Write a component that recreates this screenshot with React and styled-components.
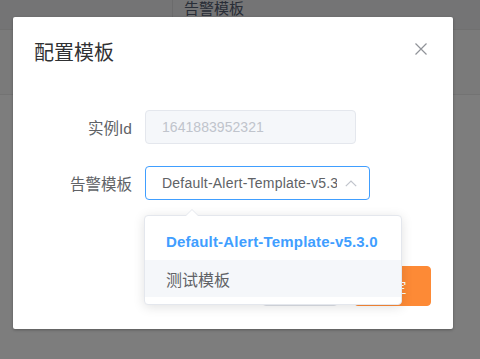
import React from "react";
import styled, { createGlobalStyle } from "styled-components";

const Global = createGlobalStyle`
  html, body { margin: 0; padding: 0; }
  body {
    width: 480px;
    height: 359px;
    overflow: hidden;
    background: #fafafa;
    font-family: "Liberation Sans", Arial, "Noto Sans CJK SC", sans-serif;
  }
  * { box-sizing: border-box; }
`;

const Page = styled.div`
  position: relative;
  width: 480px;
  height: 359px;
  overflow: hidden;
`;

const TableHead = styled.div`
  display: flex;
  height: 30px;
  background: #e8e8ea;
  border-bottom: 1px solid #e0e0e0;
`;

const HeadCell = styled.div`
  width: ${(p) => p.$w || "auto"};
  flex: ${(p) => (p.$w ? "none" : "1")};
  border-left: ${(p) => (p.$divider ? "1px solid #d6d6d8" : "none")};
  padding-left: 11px;
  font-family: "Noto Sans CJK SC", sans-serif;
  font-size: 15px;
  line-height: 16px;
  color: #515a6e;
`;

const TableRow = styled.div`
  height: 65px;
  background: #f4f4f4;
  border-bottom: 1px solid #e6e6e6;
`;

const Overlay = styled.div`
  position: absolute;
  inset: 0;
  background: rgba(0, 0, 0, 0.5);
  padding: 17px 0 0 13px;
`;

const Dialog = styled.div`
  width: 440px;
  background: #fff;
  border-radius: 2px;
  box-shadow: 0 1px 3px rgba(0, 0, 0, 0.3);
`;

const Header = styled.div`
  display: flex;
  justify-content: space-between;
  align-items: flex-start;
  padding: 20px 20px 0;
`;

const Title = styled.div`
  font-family: "Noto Sans CJK SC", sans-serif;
  font-size: 20px;
  line-height: 30px;
  color: #303133;
  margin-left: 1px;
`;

const CloseIcon = styled.svg`
  margin: 6px 6px 0 0;
  display: block;
`;

const Body = styled.div`
  padding: 43px 20px 0;
`;

const FormRow = styled.div`
  display: flex;
  align-items: center;
  height: 34px;
  margin-bottom: ${(p) => p.$mb || 0}px;
`;

const Label = styled.div`
  width: 112px;
  padding-right: 13px;
  text-align: right;
  font-family: "Liberation Sans", Arial, "Noto Sans CJK SC", sans-serif;
  font-size: 15.5px;
  color: #606266;
`;

const DisabledInput = styled.div`
  width: 211px;
  height: 34px;
  border: 1px solid #e4e7ed;
  border-radius: 4px;
  background: #f5f7fa;
  padding: 0 16px;
  display: flex;
  align-items: center;
  font-size: 14px;
  letter-spacing: 0.05px;
  color: #c0c4cc;
`;

const SelectWrap = styled.div`
  position: relative;
`;

const Select = styled.div`
  width: 225px;
  height: 34px;
  border: 1px solid #409eff;
  border-radius: 4px;
  background: #fff;
  display: flex;
  align-items: center;
  padding: 0 12px 0 16px;
`;

const SelectText = styled.span`
  flex: 1;
  overflow: hidden;
  white-space: nowrap;
  font-size: 14px;
  letter-spacing: 0.22px;
  color: #606266;
`;

const Chevron = styled.svg`
  display: block;
  margin-left: 8px;
  flex: none;
`;

const Dropdown = styled.div`
  position: absolute;
  top: 49px;
  left: -1px;
  width: 258px;
  z-index: 10;
  background: #fff;
  border: 1px solid #e4e7ed;
  border-radius: 4px;
  box-shadow: 0 2px 12px rgba(0, 0, 0, 0.12);
  padding: 6px 0 7px;

  &::before,
  &::after {
    content: "";
    position: absolute;
    left: 40px;
    width: 0;
    height: 0;
    border-style: solid;
    border-color: transparent;
  }
  &::before {
    top: -7px;
    border-width: 0 7px 7px;
    border-bottom-color: #e4e7ed;
  }
  &::after {
    top: -6px;
    left: 41px;
    border-width: 0 6px 6px;
    border-bottom-color: #fff;
  }
`;

const Option = styled.div`
  height: ${(p) => (p.$selected ? 38 : 37)}px;
  display: flex;
  align-items: center;
  padding: 0 21px;
  white-space: nowrap;
  background: ${(p) => (p.$hover ? "#f5f7fa" : "transparent")};
  color: ${(p) => (p.$selected ? "#409eff" : "#606266")};
  font-weight: ${(p) => (p.$selected ? 700 : 400)};
  font-size: ${(p) => (p.$selected ? 15 : 16)}px;
  letter-spacing: ${(p) => (p.$selected ? "0.18px" : "0")};
  font-family: ${(p) =>
    p.$selected
      ? `"Liberation Sans", Arial, sans-serif`
      : `"Noto Sans CJK SC", sans-serif`};
`;

const Footer = styled.div`
  display: flex;
  justify-content: flex-end;
  gap: 16px;
  margin-top: 66px;
  padding: 0 22px 23px 20px;
`;

const Button = styled.button`
  width: ${(p) => p.$w}px;
  height: 40px;
  border-radius: 4px;
  font-family: "Noto Sans CJK SC", sans-serif;
  font-size: 14px;
  border: 1px solid ${(p) => (p.$primary ? "#fd8a36" : "#dcdfe6")};
  background: ${(p) => (p.$primary ? "#fd8a36" : "#fff")};
  color: ${(p) => (p.$primary ? "#fff" : "#606266")};
  padding: 0;
`;

export default function App() {
  return (
    <Page>
      <Global />
      <TableHead>
        <HeadCell $w="172px" />
        <HeadCell $divider>告警模板</HeadCell>
      </TableHead>
      <TableRow />
      <Overlay>
        <Dialog>
          <Header>
            <Title>配置模板</Title>
            <CloseIcon width="12" height="12" viewBox="0 0 12 12">
              <path
                d="M0.5 0.5 L11.5 11.5 M11.5 0.5 L0.5 11.5"
                stroke="#909399"
                strokeWidth="1.2"
                fill="none"
              />
            </CloseIcon>
          </Header>
          <Body>
            <FormRow $mb={22}>
              <Label>实例Id</Label>
              <DisabledInput>1641883952321</DisabledInput>
            </FormRow>
            <FormRow>
              <Label>告警模板</Label>
              <SelectWrap>
                <Select>
                  <SelectText>Default-Alert-Template-v5.3.0</SelectText>
                  <Chevron width="12" height="7" viewBox="0 0 12 7">
                    <path
                      d="M0.8 6.2 L6 1 L11.2 6.2"
                      stroke="#c0c4cc"
                      strokeWidth="1.2"
                      fill="none"
                    />
                  </Chevron>
                </Select>
                <Dropdown>
                  <Option $selected>Default-Alert-Template-v5.3.0</Option>
                  <Option $hover>测试模板</Option>
                </Dropdown>
              </SelectWrap>
            </FormRow>
          </Body>
          <Footer>
            <Button $w={76}>取消</Button>
            <Button $w={77} $primary>
              确定
            </Button>
          </Footer>
        </Dialog>
      </Overlay>
    </Page>
  );
}
